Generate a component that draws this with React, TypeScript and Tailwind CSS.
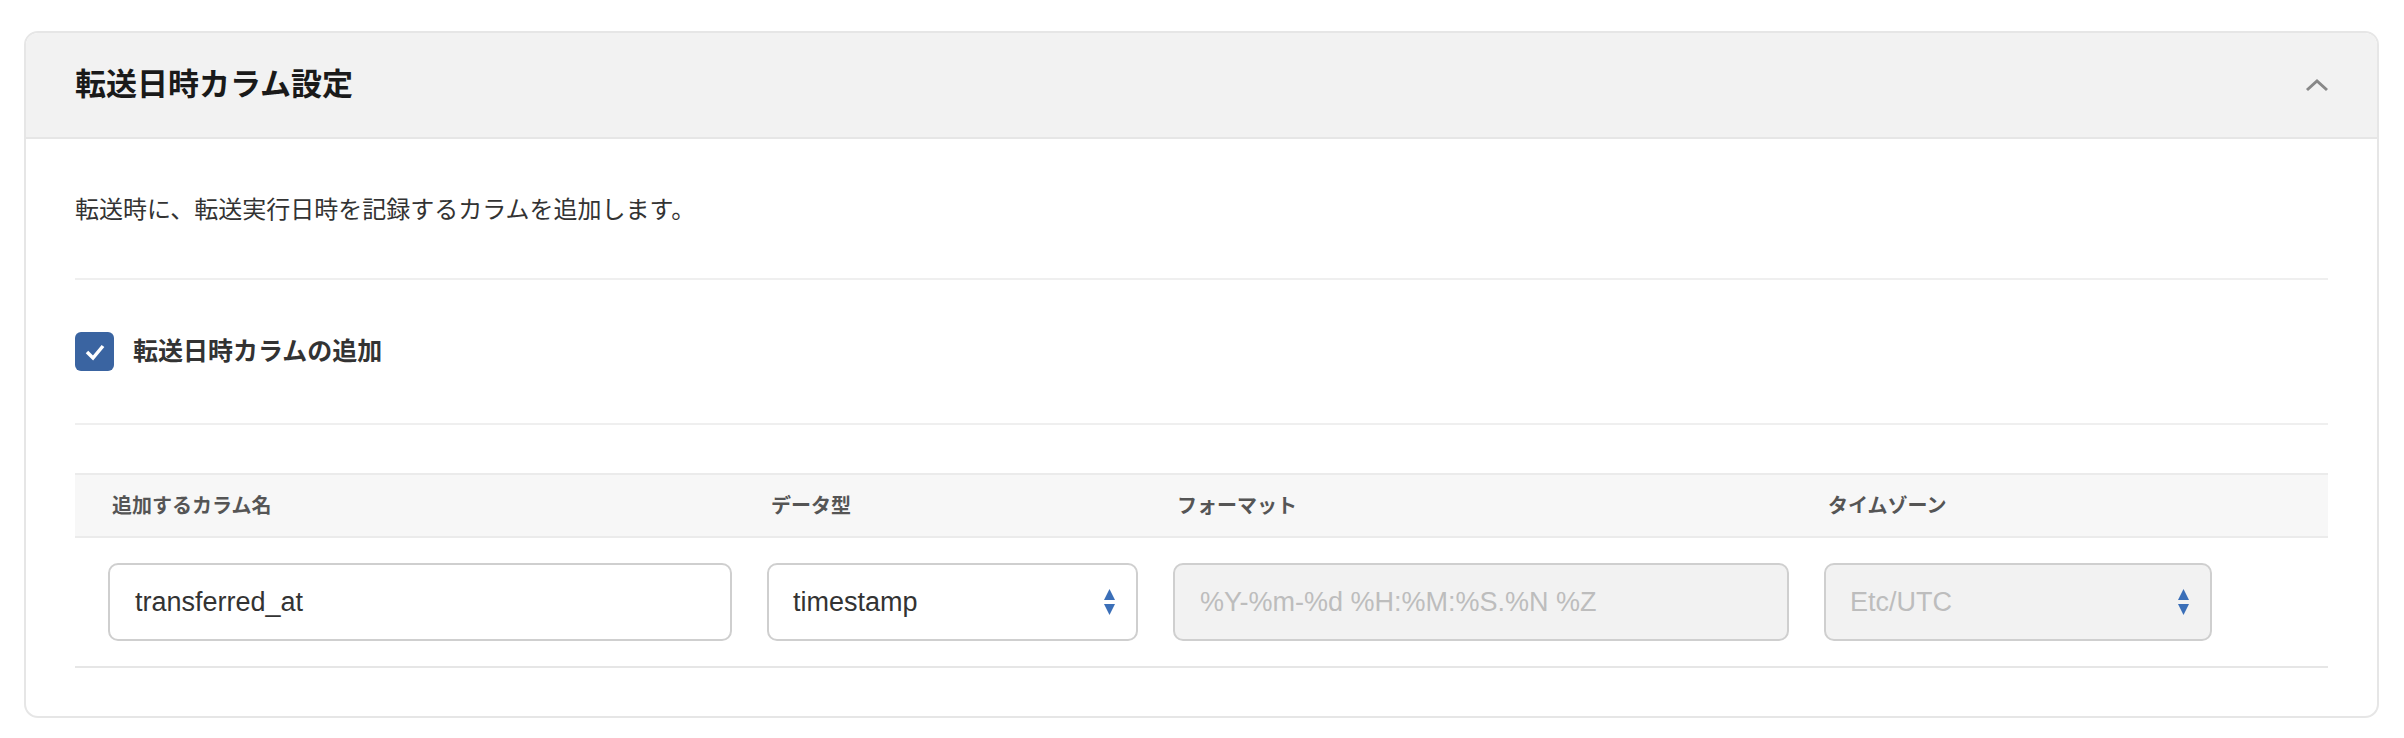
import React from "react";

const font = { fontFamily: '"Liberation Sans","Noto Sans CJK JP",sans-serif' };

function Arrows() {
  return (
    <svg width="13" height="28" viewBox="0 0 13 28" className="shrink-0">
      <path d="M6.5 1 L12 12 L1 12 Z" fill="#3b6fb8" />
      <path d="M1 16 L12 16 L6.5 27 Z" fill="#3b6fb8" />
    </svg>
  );
}

export default function App() {
  return (
    <div className="w-[2404px] h-[738px] bg-white pt-[31px] pl-[24px]" style={font}>
      <div className="w-[2355px] h-[687px] border-2 border-[#e6e6e6] rounded-[14px] overflow-hidden">
        <div className="h-[106px] bg-[#f2f2f2] border-b-2 border-[#e6e6e6] flex items-center justify-between pl-[49px] pr-[48px]">
          <span className="text-[31px] font-bold text-[#1a1a1a]">転送日時カラム設定</span>
          <svg width="24" height="14" viewBox="0 0 24 14">
            <path d="M2 12 L12 3 L22 12" fill="none" stroke="#888" strokeWidth="3" />
          </svg>
        </div>
        <div className="px-[49px]">
          <div className="h-[141px] flex items-center border-b-2 border-[#efefef] pt-[2px]">
            <span className="text-[24px] text-[#333]">転送時に、転送実行日時を記録するカラムを追加します。</span>
          </div>
          <div className="h-[145px] flex items-center gap-[19px] border-b-2 border-[#efefef]">
            <span className="w-[39px] h-[39px] rounded-[6px] bg-[#3a64a1] flex items-center justify-center">
              <svg width="22" height="18" viewBox="0 0 22 18">
                <path d="M3 9 L9 15 L19 3" fill="none" stroke="white" strokeWidth="3.5" />
              </svg>
            </span>
            <span className="text-[25px] font-bold text-[#333]">転送日時カラムの追加</span>
          </div>
          <div className="mt-[48px] border-y-2 border-[#ebebeb] bg-[#f7f7f7] h-[65px] flex items-center pl-[37px] gap-[35px] text-[20px] font-bold text-[#555]">
            <span className="w-[624px]">追加するカラム名</span>
            <span className="w-[371px]">データ型</span>
            <span className="w-[616px]">フォーマット</span>
            <span className="w-[388px]">タイムゾーン</span>
          </div>
          <div className="h-[130px] flex items-center pl-[33px] gap-[35px] border-b-2 border-[#e6e6e6] text-[27px]">
            <div className="w-[624px] h-[78px] border-2 border-[#cfcfcf] rounded-[10px] flex items-center px-[25px] text-[#333]">transferred_at</div>
            <div className="w-[371px] h-[78px] border-2 border-[#cfcfcf] rounded-[10px] flex items-center justify-between pl-[24px] pr-[20px] text-[#333]">
              <span>timestamp</span>
              <Arrows />
            </div>
            <div className="w-[616px] h-[78px] border-2 border-[#cfcfcf] bg-[#f2f2f2] rounded-[10px] flex items-center px-[25px] text-[#bdbdbd]">%Y-%m-%d %H:%M:%S.%N %Z</div>
            <div className="w-[388px] h-[78px] border-2 border-[#cfcfcf] bg-[#f2f2f2] rounded-[10px] flex items-center justify-between pl-[24px] pr-[20px] text-[#bdbdbd]">
              <span>Etc/UTC</span>
              <Arrows />
            </div>
          </div>
        </div>
      </div>
    </div>
  );
}
